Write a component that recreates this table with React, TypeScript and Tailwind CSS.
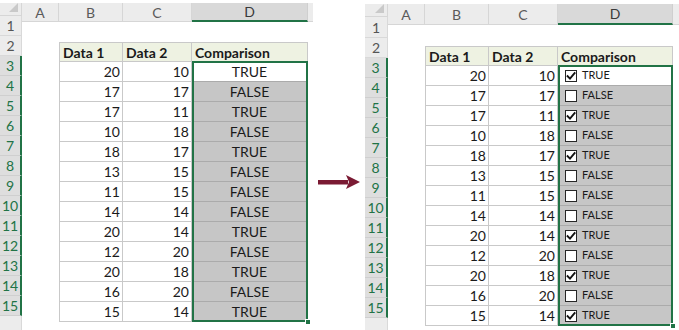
import React from "react";

type Row = [number, number, boolean];

const rows: Row[] = [
  [20, 10, true],
  [17, 17, false],
  [17, 11, true],
  [10, 18, false],
  [18, 17, true],
  [13, 15, false],
  [11, 15, false],
  [14, 14, false],
  [20, 14, true],
  [12, 20, false],
  [20, 18, true],
  [16, 20, false],
  [15, 14, true],
];

function CheckBox({ checked }: { checked: boolean }) {
  return (
    <span className="w-[12px] h-[12px] border border-[#262626] bg-white flex items-center justify-center shrink-0">
      {checked && (
        <svg width="10" height="10" viewBox="0 0 10 10" fill="none">
          <path d="M1.6 5.2 L4 7.6 L8.6 2.2" stroke="#111" strokeWidth={1.9} strokeLinecap="square" />
        </svg>
      )}
    </span>
  );
}

function Sheet({
  boxes,
  top,
  headH,
  row1H,
  rhW,
  dW,
}: {
  boxes: boolean;
  top: string;
  headH: string;
  row1H: string;
  rhW: string;
  dW: string;
}) {
  const headCell = `${headH} bg-[#ececec] border-b border-r border-[#d6d6d6] flex items-center justify-center text-[#5a5a5a] text-[14px]`;

  return (
    <div className={`flex h-[330px] overflow-hidden bg-white ${top}`}>
      {/* row headers */}
      <div className={`${rhW} flex flex-col shrink-0`}>
        <div className={`${headH} bg-[#ececec] border-b border-r border-[#d6d6d6] relative`}>
          <svg className="absolute right-[3px] bottom-[3px]" width="9" height="9" viewBox="0 0 9 9">
            <path d="M9 0 L9 9 L0 9 Z" fill="#c9c9c9" />
          </svg>
        </div>
        <div className={`${row1H} bg-[#ececec] border-b border-r border-[#d9d9d9] flex items-center justify-center text-[14px] text-[#555]`}>
          1
        </div>
        <div className="h-[20px] bg-[#ececec] border-b border-r border-[#d9d9d9] flex items-center justify-center text-[14px] text-[#555]">
          2
        </div>
        {rows.map((_, i) => (
          <div
            key={i}
            className="h-[20px] bg-[#dedede] border-b border-[#cfcfcf] border-r-2 border-r-[#217346] flex items-center justify-center text-[14px] text-[#217346]"
          >
            {i + 3}
          </div>
        ))}
        <div className="h-[20px] bg-[#ececec] border-r border-[#d9d9d9]" />
      </div>

      {/* column A */}
      <div className="w-[37px] flex flex-col shrink-0">
        <div className={headCell}>A</div>
      </div>

      {/* column B */}
      <div className="w-[64px] flex flex-col shrink-0">
        <div className={headCell}>B</div>
        <div className={row1H} />
        <div className="h-[20px] bg-[#eef2e2] border border-[#c9c9c9] flex items-center px-[3px] font-bold text-[14px] text-[#1a1a1a]">
          Data 1
        </div>
        {rows.map((r, i) => (
          <div
            key={i}
            className="h-[20px] border-l border-r border-b border-[#c9c9c9] flex items-center justify-end pr-[2px] text-[14px] text-[#1a1a1a]"
          >
            {r[0]}
          </div>
        ))}
      </div>

      {/* column C */}
      <div className="w-[69px] flex flex-col shrink-0">
        <div className={headCell}>C</div>
        <div className={row1H} />
        <div className="h-[20px] bg-[#eef2e2] border-t border-r border-b border-[#c9c9c9] flex items-center px-[3px] font-bold text-[14px] text-[#1a1a1a]">
          Data 2
        </div>
        {rows.map((r, i) => (
          <div
            key={i}
            className="h-[20px] border-r border-b border-[#c9c9c9] flex items-center justify-end pr-[2px] text-[14px] text-[#1a1a1a]"
          >
            {r[1]}
          </div>
        ))}
      </div>

      {/* column D */}
      <div className={`${dW} flex flex-col shrink-0`}>
        <div className={`${headH} bg-[#d9d9d9] border-b-2 border-b-[#217346] border-r border-r-[#cfcfcf] flex items-center justify-center text-[#3a3a3a] text-[14px]`}>
          D
        </div>
        <div className={row1H} />
        <div className="h-[20px] bg-[#eef2e2] border-t border-r border-b border-[#c9c9c9] flex items-center px-[3px] font-bold text-[14px] text-[#1a1a1a]">
          Comparison
        </div>
        <div className="relative flex flex-col">
          {rows.map((r, i) => (
            <div
              key={i}
              className={`h-[20px] border-r border-b border-[#ababab] flex items-center text-[#1a1a1a] ${
                i === 0 ? "bg-white" : "bg-[#c6c6c6]"
              } ${boxes ? "pl-[7px] gap-[5px] text-[11px]" : "justify-center text-[14px]"}`}
            >
              {boxes && <CheckBox checked={r[2]} />}
              <span>{r[2] ? "TRUE" : "FALSE"}</span>
            </div>
          ))}
          {/* selection outline */}
          <div className="absolute inset-x-0 top-[-1px] bottom-0 border-2 border-[#217346] pointer-events-none" />
          <div className="absolute right-[-3px] bottom-[-3px] w-[6px] h-[6px] bg-[#217346] border border-white" />
        </div>
      </div>

      {/* filler */}
      <div className="flex-1 flex flex-col">
        <div className={`${headH} bg-[#ececec] border-b border-[#d6d6d6]`} />
      </div>
    </div>
  );
}

export default function App() {
  return (
    <div
      className="w-[679px] h-[330px] flex bg-white overflow-hidden"
      style={{ fontFamily: "Lato, 'Open Sans', Arial, sans-serif" }}
    >
      <div className="w-[313px] shrink-0">
        <Sheet boxes={false} top="pt-[3px]" headH="h-[19px]" row1H="h-[20px]" rhW="w-[22px]" dW="w-[116px]" />
      </div>
      <div className="flex-1 flex items-start justify-center pt-[175px]">
        <svg width="42" height="14" viewBox="0 0 42 14">
          <rect x="0" y="5" width="30" height="4.5" fill="#7a1a33" />
          <path d="M28 0 L42 7 L28 14 L31 7 Z" fill="#7a1a33" />
        </svg>
      </div>
      <div className="w-[314px] shrink-0">
        <Sheet boxes={true} top="pt-[4px]" headH="h-[21px]" row1H="h-[21px]" rhW="w-[23px]" dW="w-[115px]" />
      </div>
    </div>
  );
}
